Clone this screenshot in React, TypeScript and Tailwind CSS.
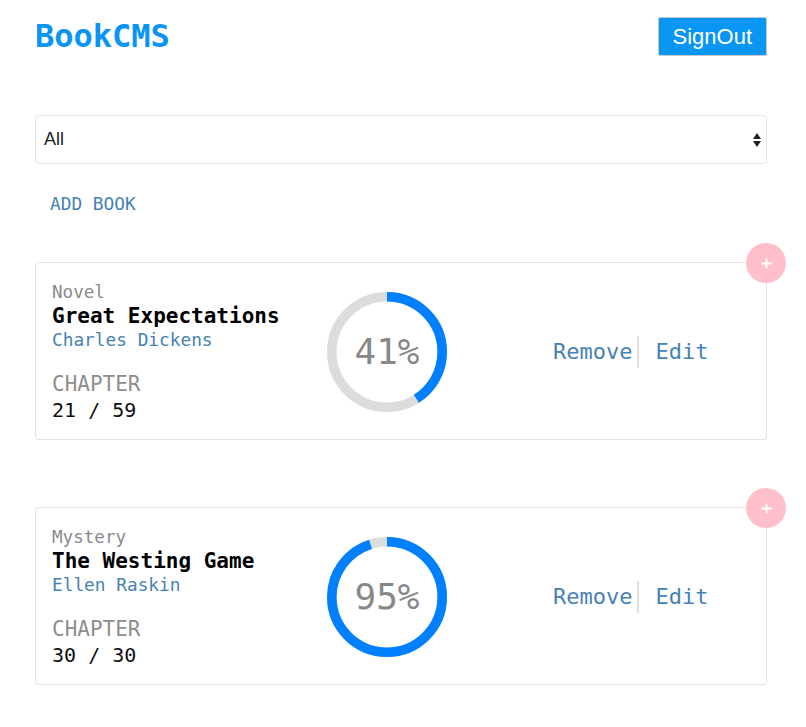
import { useState } from "react"

type Book = {
    id: number
    genre: string
    title: string
    author: string
    chapter: number
    total: number
    progress: number
}

const books: Book[] = [
    { id: 1, genre: "Novel", title: "Great Expectations", author: "Charles Dickens", chapter: 21, total: 59, progress: 41 },
    { id: 2, genre: "Mystery", title: "The Westing Game", author: "Ellen Raskin", chapter: 30, total: 30, progress: 95 },
]

const mono = "font-['DejaVu_Sans_Mono',monospace]"

function Progress({ value }: { value: number }) {
    const r = 46
    const len = 2 * Math.PI * r
    return (
        <div className="relative w-[120px] h-[120px] shrink-0">
            <svg viewBox="0 0 100 100" className="w-[120px] h-[120px]">
                <circle cx="50" cy="50" r={r} fill="none" stroke="#dcdcdc" strokeWidth="8" />
                <circle
                    cx="50" cy="50" r={r} fill="none" stroke="#0080ff" strokeWidth="8"
                    strokeDasharray={`${len} ${len}`}
                    style={{ strokeDashoffset: len * (1 - value / 100) }}
                    transform="rotate(-90 50 50)"
                />
            </svg>
            <div className={`absolute inset-0 flex items-center justify-center ${mono} text-[36px] text-[#888]`}>
                {value}%
            </div>
        </div>
    )
}

function BookCard({ book }: { book: Book }) {
    return (
        <div className="relative border border-[#e3e3e3] rounded-[3px] px-4 pt-[17px] pb-[16px] flex items-center">
            <div className={`w-[275px] shrink-0 ${mono}`}>
                <div className="text-[17.6px] leading-[24px] text-[#8a8a8a]">{book.genre}</div>
                <div className="text-[21px] leading-[24px] font-bold text-black">{book.title}</div>
                <div className="text-[17.8px] leading-[24px] text-[#4682b4]">{book.author}</div>
                <div className="mt-[20px] text-[21px] leading-[25px] text-[#8e8e8e]">CHAPTER</div>
                <div className="text-[20px] leading-[26px] text-[#111]">{book.chapter} / {book.total}</div>
            </div>
            <Progress value={book.progress} />
            <div className={`ml-[106px] flex items-center ${mono} text-[22px] text-[#4682b4]`}>
                <button className="cursor-pointer">Remove</button>
                <div className="ml-[5px] w-[2px] h-[32px] bg-[#e0e0e0]"></div>
                <button className="ml-[16px] cursor-pointer">Edit</button>
            </div>
            <div className="absolute -top-[20px] -right-[20px] w-10 h-10 rounded-full bg-[#ffc0cb] flex items-center justify-center">
                <svg width="11" height="11" viewBox="0 0 11 11">
                    <path d="M5.5 0.5v10M0.5 5.5h10" stroke="white" strokeWidth="1.8" />
                </svg>
            </div>
        </div>
    )
}

export default function App() {
    const [filter] = useState("All")
    return (
        <div className="min-h-screen bg-white px-[35px] pb-10 w-[806px]">
            <div className="w-[732px]">
                <div className="pt-[17px] flex items-center justify-between">
                    <h1 className={`${mono} font-bold text-[32px] leading-[39px] text-[#0995f5]`}>BookCMS</h1>
                    <button className="h-[39px] px-[14px] bg-[#0896f5] border border-[#c8c8c8] rounded-[2px] text-white text-[22px] font-['Liberation_Sans',Arial,sans-serif]">
                        SignOut
                    </button>
                </div>

                <div className="mt-[59px] h-[49px] border border-[#e5e5e5] rounded-[4px] flex items-center justify-between pl-[8px] pr-[4px] font-['Liberation_Sans',Arial,sans-serif] text-[18px] text-[#222]">
                    <span>{filter}</span>
                    <svg width="10" height="16" viewBox="0 0 10 16">
                        <path d="M5 1L9 7H1Z" fill="#222" />
                        <path d="M5 15L9 9H1Z" fill="#222" />
                    </svg>
                </div>

                <div className={`mt-[28px] ml-[15px] ${mono} text-[17.8px] leading-[24px] text-[#4682b4]`}>ADD BOOK</div>

                <div className="mt-[46px] flex flex-col gap-[67px]">
                    {books.map(b => <BookCard key={b.id} book={b} />)}
                </div>
            </div>
        </div>
    )
}
